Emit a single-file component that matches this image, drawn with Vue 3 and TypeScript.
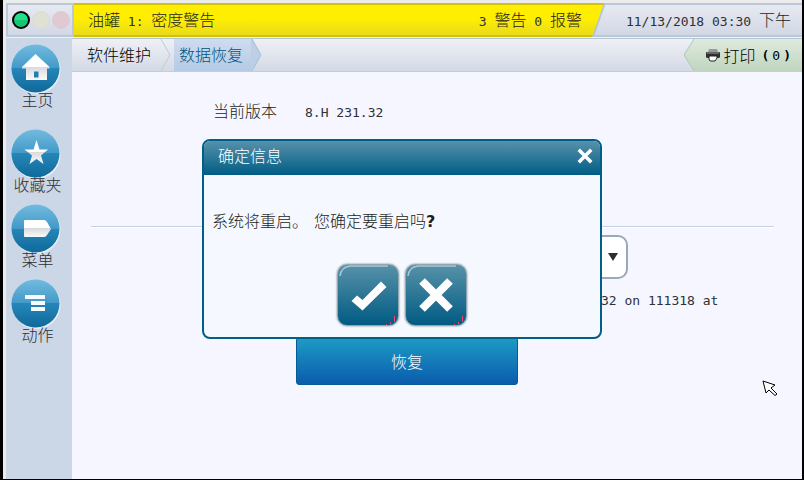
<script setup lang="ts">
import { ref } from 'vue'

type NavIcon = 'home' | 'star' | 'tag' | 'list'

const navItems: { label: string; icon: NavIcon }[] = [
  { label: '主页', icon: 'home' },
  { label: '收藏夹', icon: 'star' },
  { label: '菜单', icon: 'tag' },
  { label: '动作', icon: 'list' },
]

const dialogOpen = ref(true)
const closeDialog = () => {
  dialogOpen.value = false
}
</script>

<template>
  <div class="frame">
    <div class="screen">
      <header class="status">
        <div class="lamps">
          <i class="lamp on"></i><i class="lamp warn"></i><i class="lamp alarm"></i>
        </div>
        <div class="banner-wrap">
          <div class="banner">
            <span>油罐<span class="num"> 1: </span>密度警告</span>
            <span><span class="num">3 </span>警告<span class="num"> 0 </span>报警</span>
          </div>
        </div>
        <time class="clock"><span><span class="num">11/13/2018 03:30 </span>下午</span></time>
      </header>

      <div class="body">
        <nav class="side">
          <a v-for="item in navItems" :key="item.icon" href="#" class="side-item" :class="item.icon">
            <svg viewBox="0 0 50 50" width="50" height="50" aria-hidden="true">
              <defs>
                <linearGradient :id="'disc-' + item.icon" x1="0" y1="0" x2="0" y2="1">
                  <stop offset="0" stop-color="#72bbdf" />
                  <stop offset=".5" stop-color="#4199c8" />
                  <stop offset=".5" stop-color="#2686b8" />
                  <stop offset="1" stop-color="#10699b" />
                </linearGradient>
                <linearGradient :id="'ink-' + item.icon" x1="0" y1="0" x2="0" y2="1">
                  <stop offset=".5" stop-color="#fff" />
                  <stop offset=".5" stop-color="#d9dade" />
                  <stop offset="1" stop-color="#fafafa" />
                </linearGradient>
              </defs>
              <circle cx="25.500" cy="26" r="24" fill="#e9eef5" />
              <circle cx="24.500" cy="24.500" r="24" :fill="`url(#disc-${item.icon})`" />
              <path v-if="item.icon === 'home'" :fill="`url(#ink-${item.icon})`" fill-rule="evenodd" d="M24.500 10 38.500 23V24.500H36V36H15V24.500H11V23ZM23 27.500V33.500H27.500V27.500Z" />
              <path v-else-if="item.icon === 'star'" :fill="`url(#ink-${item.icon})`" d="M25.500 11 28.500 20.500H37L30 26.500 32.500 35 25.500 30 18.500 35 21 26.500 13.500 20.500H22.500Z" />
              <path v-else-if="item.icon === 'tag'" :fill="`url(#ink-${item.icon})`" d="M14 16H33Q35 16 36 18L40 25 36 31Q35 33 33 33H14Q13 33 13 32V17Q13 16 14 16Z" />
              <g v-else fill="#f7fafc">
                <path d="M14 16H34V20H14ZM20 22H34V26H20ZM20 28H34V32H20Z" />
              </g>
            </svg>
            <span>{{ item.label }}</span>
          </a>
        </nav>

        <div class="workspace">
          <div class="crumbs">
            <a href="#" class="crumb first">软件维护</a>
            <svg class="chevron" viewBox="0 0 12 32" width="12" height="32" aria-hidden="true">
              <path d="M1 0 10 16 1 32" fill="none" stroke="#bccbd8" />
            </svg>
            <a href="#" class="crumb current">数据恢复</a>
            <svg class="chevron" viewBox="0 0 12 32" width="12" height="32" aria-hidden="true">
              <path d="M0 0H1L10 16 1 32H0Z" fill="#bdcfe6" />
              <path d="M1 0 10 16 1 32" fill="none" stroke="#a9bfd2" />
            </svg>
            <div class="print-edge">
              <button type="button" class="print">
                <svg viewBox="0 0 14 14" width="14" height="14" aria-hidden="true">
                  <path d="M3 1H11L12 4H2Z" fill="#999" />
                  <path d="M1 4Q0 4 0 5V9Q0 10 2 10H12Q14 10 14 9V5Q14 4 13 4Z" fill="#303030" />
                  <path d="M1 4H13V6H1Z" fill="#666" />
                  <path d="M3 8H11V10L9 13H5Q3 13 3 11Z" fill="#fff" stroke="#222" />
                </svg>
                <span>打印</span>
                <span class="count num"><b>(</b><span>0</span><b>)</b></span>
              </button>
            </div>
          </div>

          <main class="content">
            <div class="version">
              <span>当前版本</span><span class="num">8.H 231.32</span>
            </div>
            <hr class="rule" />
            <div class="picker">
              <select aria-label="当前版本" class="select"></select>
              <svg class="arrow" viewBox="0 0 10 8" width="10" height="8" aria-hidden="true">
                <path d="M0 0H10L5 8Z" fill="#2c2e30" />
              </svg>
            </div>
            <p class="note num">32 on 111318 at</p>
            <button type="button" class="restore">恢复</button>
          </main>
        </div>
      </div>
    </div>

    <div v-if="dialogOpen" class="overlay">
      <section class="dialog" role="dialog" aria-labelledby="dialog-title">
        <header class="dialog-head">
          <h1 id="dialog-title">确定信息</h1>
          <button type="button" class="close" @click="closeDialog">
            <svg viewBox="0 0 16 16" width="16" height="16" aria-hidden="true">
              <path d="M3 3 13 13M13 3 3 13" stroke="#fff" stroke-width="3.500" stroke-linecap="square" />
            </svg>
          </button>
        </header>
        <p class="message"><span>系统将重启。</span><span>您确定要重启吗<b>?</b></span></p>
        <div class="actions">
          <button type="button" class="action" @click="closeDialog">
            <svg viewBox="0 0 60 60" width="60" height="60" aria-hidden="true">
              <path d="M2 11Q3 2 12 1H50" fill="none" stroke="#a9c8d5" stroke-width="1.500" />
              <path d="M13.500 36 19 30.500 24.500 35 43 16.500 48.500 22 24.500 45.500Z" fill="#fff" />
              <path d="M48.500 59V60M52.500 57V59M56.500 51V57" stroke="#f0476b" />
            </svg>
          </button>
          <button type="button" class="action" @click="closeDialog">
            <svg viewBox="0 0 60 60" width="60" height="60" aria-hidden="true">
              <path d="M2 11Q3 2 12 1H50" fill="none" stroke="#a9c8d5" stroke-width="1.500" />
              <path d="M16 16 44 44M44 16 16 44" stroke="#fff" stroke-width="8" />
              <path d="M48.500 59V60M52.500 57V59M56.500 51V57" stroke="#f0476b" />
            </svg>
          </button>
        </div>
      </section>
    </div>

    <svg class="pointer" viewBox="0 0 16 16" width="16" height="16" aria-hidden="true">
      <path d="M1 1 13 5 9 8 15 14 13 15.500 7 10 4 13Z" fill="#fff" stroke="#000" />
    </svg>
  </div>
</template>

<style>
body {
  margin: 0;
  background: #000;
}
</style>

<style scoped>
* {
  box-sizing: border-box;
}

.frame {
  position: relative;
  display: flex;
  min-height: 100vh;
  padding: 0 2px 1px 3px;
  background: #000;
  color: #1c1e20;
  font-family: "Noto Sans CJK SC", sans-serif;
  font-size: 16px;
  font-weight: 300;
  line-height: 22px;
}

.num {
  color: #2f3133;
  font-family: "DejaVu Sans Mono", monospace;
  font-size: 13px;
  white-space: pre;
}

b {
  font-weight: 700;
}

a {
  color: inherit;
  text-decoration: none;
}

button {
  padding: 0;
  border: 0;
  background: none;
  color: inherit;
  font: inherit;
}

svg {
  display: block;
}

.screen {
  flex: 1;
  display: flex;
  flex-direction: column;
  padding: 3px 0 0 3px;
  background: #ececec;
}

.status {
  display: flex;
  height: 35px;
  border-bottom: 1px solid #eef2f6;
  background: linear-gradient(#e9ebf2, #cfd6e4);
}

.lamps {
  display: flex;
  align-items: center;
  gap: 2px;
  width: 68px;
  padding-left: 4px;
  border: 2px solid #bac8d7;
}

.lamp {
  width: 18px;
  height: 18px;
  border-radius: 50%;
}

.on {
  border: 2px solid #000;
  background: linear-gradient(#22df8b 50%, #16c674 50%);
}

.warn {
  border: 1px solid #d8dcdc;
  background: #dfe1d2;
}

.alarm {
  border: 1px solid #d9ccd6;
  background: #e0c9d1;
}

.banner-wrap {
  flex: 1;
  display: flex;
  background: #b7c6d6;
  clip-path: polygon(0 0, 100% 0, calc(100% - 12px) 100%, 0 100%);
}

.banner {
  flex: 1;
  display: flex;
  align-items: center;
  justify-content: space-between;
  margin-right: 2px;
  padding: 0 22px 0 14px;
  border-top: 2px solid #d2c20c;
  border-bottom: 2px solid #d2c20c;
  background: linear-gradient(#ffee00 45%, #eadb1c);
  clip-path: polygon(0 0, 100% 0, calc(100% - 12px) 100%, 0 100%);
}

.clock {
  display: flex;
  align-items: center;
  margin-left: -12px;
  padding: 0 11px 0 32px;
  border-top: 2px solid #bac8d7;
  border-bottom: 2px solid #bac8d7;
}

.body {
  flex: 1;
  display: flex;
}

.side {
  display: flex;
  flex-direction: column;
  width: 66px;
  padding-top: 6px;
  background: #cbd6e6;
  color: #2c3034;
}

.side-item {
  display: flex;
  flex-direction: column;
  align-items: center;
  height: 75px;
  padding-right: 6px;
}

.side-item.home {
  height: 85px;
}

.side-item span {
  margin-top: -6px;
  padding-left: 3px;
}

.workspace {
  flex: 1;
  display: flex;
  flex-direction: column;
}

.crumbs {
  display: flex;
  height: 34px;
  border-top: 1px solid #b5c7d5;
  border-bottom: 1px solid #c2ced9;
  background: linear-gradient(#eff0f5, #d3dae5);
}

.crumb {
  display: flex;
  align-items: center;
  padding-bottom: 2px;
}

.first {
  padding-left: 15px;
  padding-right: 9px;
  color: #000;
}

.current {
  margin-left: 2px;
  padding-left: 5px;
  padding-right: 8px;
  background: linear-gradient(#d0dcef, #b5cae4);
  color: #005580;
}

.print-edge {
  display: flex;
  margin-left: auto;
  padding-left: 1px;
  background: #a9c9b5;
  clip-path: polygon(10px 0, 100% 0, 100% 100%, 10px 100%, 0 50%);
}

.print {
  display: flex;
  align-items: center;
  gap: 4px;
  padding: 0 11px 0 21px;
  background: linear-gradient(#dfeade, #bfd5bf);
  color: #000;
  clip-path: polygon(10px 0, 100% 0, 100% 100%, 10px 100%, 0 50%);
}

.count {
  display: flex;
  gap: 3px;
  padding: 2px 0 0 2px;
  color: #000;
}

.content {
  flex: 1;
  display: flex;
  flex-direction: column;
  padding: 27px 28px 0 19px;
  background: #f5f6ff;
}

.version {
  display: flex;
  align-items: baseline;
  gap: 28px;
  padding-left: 122px;
}

.rule {
  width: 100%;
  height: 2px;
  margin: 102px 0 7px;
  border: 0;
  border-top: 1px solid #c5d2e2;
  border-bottom: 1px solid #fff;
}

.picker {
  display: grid;
  align-items: center;
  width: 323px;
  margin-left: 214px;
}

.select {
  grid-area: 1 / 1;
  width: 100%;
  height: 44px;
  border: 2px solid #98a9bb;
  border-radius: 10px;
  background: #fff;
  appearance: none;
}

.arrow {
  grid-area: 1 / 1;
  justify-self: end;
  margin-right: 10px;
  pointer-events: none;
}

.note {
  margin: 11px 0 25px;
  padding-left: 510px;
}

.restore {
  width: 222px;
  height: 48px;
  margin-left: 205px;
  border: 1px solid #075a96;
  border-radius: 3px;
  background: linear-gradient(#1e9bc6, #0a5cac);
  color: #fff;
}

.overlay {
  position: absolute;
  inset: 0 0 2px;
  display: flex;
  align-items: center;
  justify-content: center;
}

.dialog {
  width: 400px;
  height: 200px;
  border: 2px solid #005f85;
  border-radius: 8px;
  background: #f5f9ff;
  overflow: hidden;
}

.dialog-head {
  display: flex;
  align-items: flex-start;
  justify-content: space-between;
  height: 34px;
  padding: 3px 7px 0 14px;
  background: linear-gradient(#5791aa, #005d85);
  color: #fff;
}

.dialog-head h1 {
  margin: 0;
  font: inherit;
}

.close {
  padding-top: 4px;
}

.message {
  display: flex;
  gap: 6px;
  margin: 34px 0 31px;
  padding-left: 8px;
}

.message b {
  font-family: "DejaVu Sans", sans-serif;
}

.actions {
  display: flex;
  justify-content: center;
  gap: 6px;
}

.action {
  border: 1px solid #8fa6b3;
  border-radius: 10px;
  background: linear-gradient(#5791a8, #005b83);
  box-shadow: 0 0 2px #666;
  overflow: hidden;
}

.pointer {
  position: absolute;
  left: 762px;
  top: 380px;
}
</style>
